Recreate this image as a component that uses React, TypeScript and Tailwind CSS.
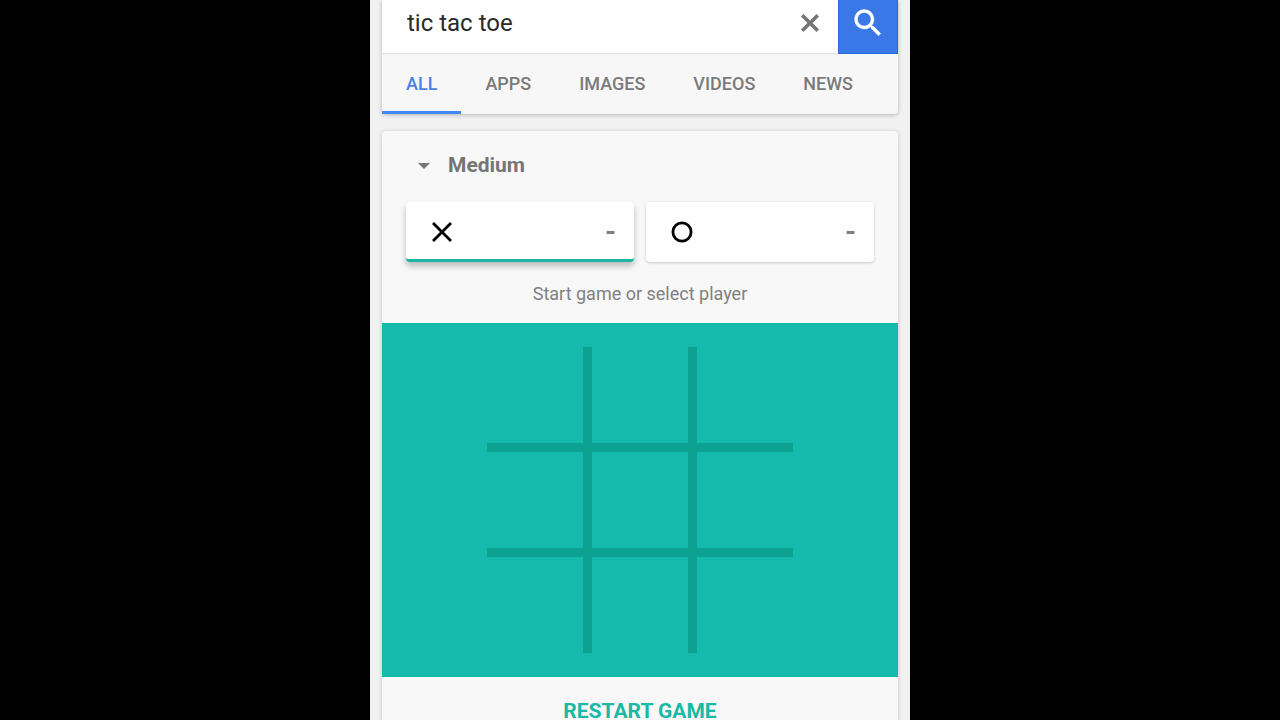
import { useState } from "react";

const TABS = ["ALL", "APPS", "IMAGES", "VIDEOS", "NEWS"];
const CELLS = Array.from({ length: 9 }, (_, i) => i);

function CrossIcon() {
  return (
    <svg viewBox="0 0 24 24" className="size-6" fill="none" stroke="#000" strokeWidth="2.8" aria-hidden="true">
      <path d="M3 3 21 21M21 3 3 21" />
    </svg>
  );
}

function NoughtIcon() {
  return (
    <svg viewBox="0 0 24 24" className="size-6" fill="none" stroke="#000" strokeWidth="2.8" aria-hidden="true">
      <circle cx="12" cy="12" r="9.1" />
    </svg>
  );
}

function SearchBar() {
  const [query, setQuery] = useState("tic tac toe");
  return (
    <form role="search" className="flex h-[54px] bg-white" onSubmit={(e) => e.preventDefault()}>
      <div className="flex min-w-0 flex-1 items-center border-b border-[#dedede] pr-4 pb-[7px] pl-[25px]">
        <input
          aria-label="Search"
          value={query}
          onChange={(e) => setQuery(e.target.value)}
          className="min-w-0 flex-1 bg-transparent text-2xl text-[#2a2a2a] outline-none"
        />
        <button type="button" aria-label="Clear search" onClick={() => setQuery("")}>
          <svg viewBox="0 0 24 24" className="size-6" fill="none" stroke="#757575" strokeWidth="3.6" aria-hidden="true">
            <path d="M4.2 4.2 19.8 19.8M19.8 4.2 4.2 19.8" />
          </svg>
        </button>
      </div>
      <button
        type="submit"
        aria-label="Submit search"
        className="flex w-[60px] items-center justify-center border-x border-b border-[#2f65d6] bg-[#3b78e7] pb-[7px]"
      >
        <svg viewBox="0 0 24 24" className="size-9" fill="#fff" stroke="#fff" strokeWidth="0.3" aria-hidden="true">
          <path d="M15.5 14h-.79l-.28-.27A6.471 6.471 0 0 0 16 9.5 6.5 6.5 0 1 0 9.5 16c1.61 0 3.09-.59 4.23-1.57l.27.28v.79l5 4.99L20.49 19l-4.99-5zm-6 0C7.01 14 5 11.99 5 9.5S7.01 5 9.5 5 14 7.01 14 9.5 11.99 14 9.5 14z" />
        </svg>
      </button>
    </form>
  );
}

function TabBar() {
  return (
    <nav className="flex h-[60px] text-lg font-medium text-[#7a7a7a]">
      {TABS.map((tab, i) => (
        <a
          key={tab}
          href="#"
          aria-current={i === 0 ? "page" : undefined}
          className={
            i === 0
              ? "flex items-center border-y-3 border-t-transparent border-b-[#4285f4] px-6 text-[#4a80e4]"
              : "flex items-center border-y-3 border-transparent px-6"
          }
        >
          {tab}
        </a>
      ))}
    </nav>
  );
}

export default function App() {
  return (
    <div className="h-screen overflow-hidden bg-black font-[Roboto,sans-serif]">
      <div className="mx-auto h-full max-w-[540px] bg-[#f1f1f1] px-3">
        <header className="rounded-b-sm bg-[#f7f7f7] shadow-[0_1px_4px_rgba(0,0,0,0.25)]">
          <SearchBar />
          <TabBar />
        </header>

        <main className="mt-[17px] rounded-t-sm bg-[#f8f8f8] shadow-[0_1px_4px_rgba(0,0,0,0.2)]">
          <div className="px-6 pt-[17px]">
            <label className="flex h-9 items-center gap-[18px] pl-3">
              <svg viewBox="0 0 12 6" className="h-1.5 w-3" fill="#757575" aria-hidden="true">
                <path d="M0 0h12L6 6z" />
              </svg>
              <select
                aria-label="Difficulty"
                defaultValue="Medium"
                className="appearance-none bg-transparent text-[21px] font-bold text-[#757575] outline-none"
              >
                <option>Easy</option>
                <option>Medium</option>
                <option>Impossible</option>
              </select>
            </label>

            <div className="mt-[18px] grid grid-cols-2 gap-3 text-[28px] font-bold text-[#808080]">
              <button
                type="button"
                aria-label="Play as X"
                className="flex h-[60px] items-center justify-between rounded-sm border-b-3 border-[#1fb5a3] bg-white pt-[3px] pr-[18px] pl-6 shadow-[0_4px_6px_rgba(0,0,0,0.25)]"
              >
                <CrossIcon />
                <span>-</span>
              </button>
              <button
                type="button"
                aria-label="Play as O"
                className="flex h-[60px] items-center justify-between rounded-sm bg-white pr-[18px] pl-6 shadow-[0_1px_3px_rgba(0,0,0,0.2)]"
              >
                <NoughtIcon />
                <span>-</span>
              </button>
            </div>

            <p className="flex h-[61px] items-center justify-center pt-[3px] text-lg text-[#808080]">
              Start game or select player
            </p>
          </div>

          <div className="flex justify-center bg-[#14bbac] py-6">
            <div className="grid grid-cols-[repeat(3,96px)] grid-rows-[repeat(3,96px)] gap-[9px] bg-[#0da192]">
              {CELLS.map((cell) => (
                <button key={cell} type="button" aria-label={`Square ${cell + 1}`} className="bg-[#14bbac]" />
              ))}
            </div>
          </div>

          <button type="button" className="h-[70px] w-full text-[21px] font-bold text-[#1ab8a6]">
            RESTART GAME
          </button>
        </main>
      </div>
    </div>
  );
}
